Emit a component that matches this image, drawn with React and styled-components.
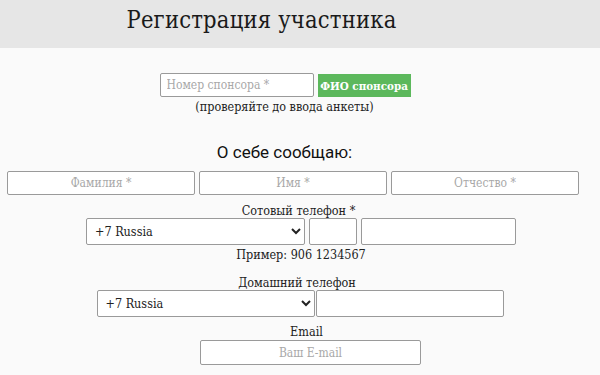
import React from 'react';
import styled, { createGlobalStyle } from 'styled-components';

const Global = createGlobalStyle`
  html, body {
    margin: 0;
    padding: 0;
    background: #fafafa;
    font-family: "DejaVu Serif Condensed", "DejaVu Serif", "Liberation Serif", serif;
    color: #222;
  }
`;

const Header = styled.header`
  height: 48px;
  background: #e6e6e6;
  display: flex;
  align-items: center;
  justify-content: center;
`;

const Title = styled.h1`
  margin: 0 0 9px;
  font-weight: 400;
  font-size: 23.5px;
  letter-spacing: 0.2px;
  color: #1a1a1a;
  padding-right: 77px;
`;

const Form = styled.form`
  width: 572px;
  margin-left: 7px;
  display: flex;
  flex-direction: column;
  align-items: center;
`;

const Row = styled.div`
  display: flex;
  gap: ${p => p.gap ?? 4}px;
  justify-content: center;
  margin-left: ${p => p.shift || 0}px;
  margin-top: ${p => p.top || 0}px;
`;

const Input = styled.input`
  box-sizing: border-box;
  width: ${p => p.w}px;
  height: ${p => p.h || 24}px;
  border: 1px solid #9a9a9a;
  border-radius: 2px;
  background: #fff;
  font-family: inherit;
  font-size: 12px;
  padding: 0 6px;
  text-align: ${p => (p.center ? 'center' : 'left')};
  &::placeholder {
    color: #a8a8a8;
  }
`;

const Select = styled.select`
  box-sizing: border-box;
  width: ${p => p.w}px;
  height: 27px;
  border: 1px solid #9a9a9a;
  border-radius: 2px;
  background: #fff;
  font-family: inherit;
  font-size: 12.5px;
  color: #222;
  padding: 0 4px;
`;

const GreenButton = styled.button`
  width: 93px;
  height: 23px;
  margin-top: 1px;
  padding: 0;
  border: none;
  background: #5cb85c;
  color: #fff;
  font-family: inherit;
  font-weight: 700;
  font-size: 11.5px;
`;

const Note = styled.div`
  font-size: 12.5px;
  margin-top: ${p => p.top || 2}px;
  margin-left: ${p => p.shift || 0}px;
  line-height: 15px;
`;

const Section = styled.h2`
  margin: 28px 0 9px;
  margin-left: ${p => p.shift || 0}px;
  font-family: Roboto, "Liberation Sans", sans-serif;
  font-weight: 400;
  font-size: 17px;
  color: #111;
`;

export default function App() {
  return (
    <>
      <Global />
      <Header>
        <Title>Регистрация участника</Title>
      </Header>
      <Form onSubmit={e => e.preventDefault()}>
        <Row top={25} shift={-16}>
          <Input w={154} placeholder="Номер спонсора *" />
          <GreenButton type="button">ФИО спонсора</GreenButton>
        </Row>
        <Note shift={-17}>(проверяйте до ввода анкеты)</Note>

        <Section shift={-17}>О себе сообщаю:</Section>
        <Row gap={4}>
          <Input w={188} center placeholder="Фамилия *" />
          <Input w={188} center placeholder="Имя *" />
          <Input w={188} center placeholder="Отчество *" />
        </Row>

        <Note top={8} shift={11}>Сотовый телефон *</Note>
        <Row top={0} shift={16}>
          <Select w={219} defaultValue="ru">
            <option value="ru">+7 Russia</option>
          </Select>
          <Input w={48} h={27} />
          <Input w={155} h={27} />
        </Row>
        <Note top={2} shift={16}>Пример: 906 1234567</Note>

        <Note top={13} shift={8}>Домашний телефон</Note>
        <Row top={0} gap={1} shift={14}>
          <Select w={218} defaultValue="ru">
            <option value="ru">+7 Russia</option>
          </Select>
          <Input w={188} h={27} />
        </Row>
        <Note top={7} shift={27}>Email</Note>
        <Row top={1} shift={35}>
          <Input w={221} h={25} center placeholder="Ваш E-mail" />
        </Row>
      </Form>
    </>
  );
}
